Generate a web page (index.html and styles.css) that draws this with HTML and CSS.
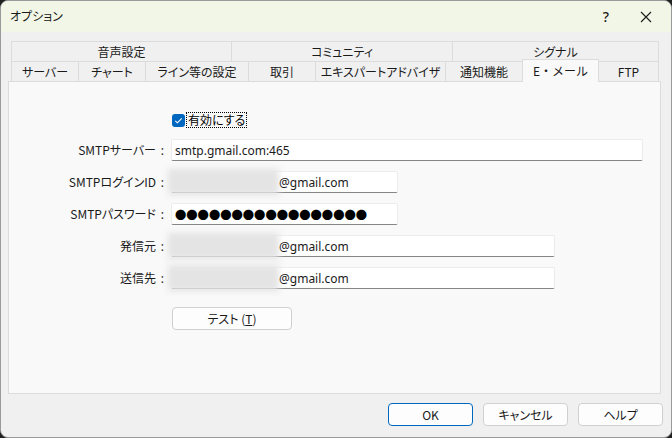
FILE: index.html
```html
<!DOCTYPE html>
<html lang="ja">
<head>
<meta charset="utf-8">
<title>オプション</title>
<link rel="stylesheet" href="styles.css">
</head>
<body>
<div class="window">
  <div class="titlebar">
    <span class="title">オプション</span>
    <span class="tb-help">?</span>
    <span class="tb-close">
      <svg width="12" height="12" viewBox="0 0 12 12"><path d="M1 1 L11 11 M11 1 L1 11" stroke="#1a1a1a" stroke-width="1.1" fill="none"/></svg>
    </span>
  </div>
  <div class="content">
    <div class="tabs">
      <div class="tabrow row1">
        <div class="tab w220">音声設定</div>
        <div class="tab w221">コミュニティ</div>
        <div class="tab w207">シグナル</div>
      </div>
      <div class="tabrow row2">
        <div class="tab t1">サーバー</div>
        <div class="tab t2">チャート</div>
        <div class="tab t3">ライン等の設定</div>
        <div class="tab t4">取引</div>
        <div class="tab t5">エキスパートアドバイザ</div>
        <div class="tab t6">通知機能</div>
        <div class="tab t7 selected">E・メール</div>
        <div class="tab t8">FTP</div>
      </div>
    </div>
    <div class="panel">
      <div class="form">
        <div class="row check-row">
          <span class="label"></span>
          <span class="checkbox">
            <svg width="13" height="13" viewBox="0 0 13 13"><rect x="0" y="0" width="13" height="13" rx="3" fill="#0067c0"/><path d="M3.3 6.8 L5.4 8.8 L9.8 4.4" stroke="#fff" stroke-width="1.1" fill="none"/></svg>
          </span>
          <span class="check-label">有効にする</span>
        </div>
        <div class="row">
          <span class="label">SMTPサーバー<span class="colon">:</span></span>
          <div class="input w-long">smtp.gmail.com:465</div>
        </div>
        <div class="row">
          <span class="label">SMTPログインID<span class="colon">:</span></span>
          <div class="input w-short"><span class="blur"></span><span class="after">@gmail.com</span></div>
        </div>
        <div class="row">
          <span class="label">SMTPパスワード<span class="colon">:</span></span>
          <div class="input w-short"><span class="dots">●●●●●●●●●●●●●●●●●</span></div>
        </div>
        <div class="row">
          <span class="label">発信元<span class="colon">:</span></span>
          <div class="input w-mid"><span class="blur"></span><span class="after">@gmail.com</span></div>
        </div>
        <div class="row">
          <span class="label">送信先<span class="colon">:</span></span>
          <div class="input w-mid"><span class="blur"></span><span class="after">@gmail.com</span></div>
        </div>
        <div class="row test-row">
          <span class="label"></span>
          <button class="btn test">テスト (<u>T</u>)</button>
        </div>
      </div>
    </div>
    <div class="buttons">
      <button class="btn default">OK</button>
      <button class="btn">キャンセル</button>
      <button class="btn">ヘルプ</button>
    </div>
  </div>
</div>
</body>
</html>
```
FILE: styles.css
```css
* { box-sizing: border-box; }
html, body { margin: 0; padding: 0; }
body {
  width: 672px;
  height: 438px;
  background: #202020;
  font-family: "Noto Sans", "Noto Sans CJK JP", sans-serif;
  font-size: 12px;
  color: #000;
  overflow: hidden;
}
.window {
  width: 672px;
  height: 438px;
  background: #f0f0f0;
  border-radius: 8px;
  border: 1px solid #9a9a9a;
  overflow: hidden;
  display: flex;
  flex-direction: column;
}
.titlebar {
  height: 31px;
  flex: none;
  background: #f2f6e6;
  display: flex;
  align-items: center;
  font-family: "Noto Sans CJK JP", sans-serif;
  font-feature-settings: "palt";
  font-size: 12px;
  color: #1a1a1a;
}
.title { padding-left: 9px; flex: 1; margin-top: -2px; }
.tb-help { width: 20px; text-align: center; margin-right: 24px; font-family: "Noto Sans", sans-serif; font-size: 14px; font-weight: 500; }
.tb-close { width: 12px; height: 12px; margin-right: 19px; display: flex; }
.content {
  flex: 1;
  padding: 9px 8px 0 7px;
  display: flex;
  flex-direction: column;
}
.tabs { padding: 0 3px 0 3px; font-family: "Noto Sans CJK JP", sans-serif; font-feature-settings: "palt"; }
.tabrow { display: flex; height: 20px; }
.tab {
  height: 20px;
  border: 1px solid #dcdcdc;
  border-right: none;
  border-bottom: none;
  background: #f0f0f0;
  display: flex;
  align-items: center;
  justify-content: center;
  font-size: 12px;
  color: #1a1a1a;
  line-height: 1;
  white-space: nowrap;
}
.tab:last-child { border-right: 1px solid #dcdcdc; }
.w220 { width: 220px; }
.w221 { width: 221px; }
.w207 { width: 207px; }
.t1 { width: 67px; }
.t2 { width: 67px; }
.t3 { width: 103px; }
.t4 { width: 67px; }
.t5 { width: 130px; }
.t6 { width: 77px; }
.t7 { width: 77px; font-feature-settings: normal; }
.t8 { width: 61px; }
.tab.selected {
  background: #f9f9f9;
  height: 23px;
  margin-top: -2px;
  position: relative;
  z-index: 2;
  border-right: 1px solid #dcdcdc;
  margin-right: -1px;
  padding-bottom: 1px;
}
.panel {
  height: 313px;
  background: #f9f9f9;
  border: 1px solid #dcdcdc;
  margin-right: 2px;
  position: relative;
  z-index: 1;
}
.form {
  padding-top: 30px;
  display: flex;
  flex-direction: column;
  gap: 10px;
}
.row { display: flex; align-items: center; height: 22px; }
.check-row { height: 16px; margin-bottom: 1px; }
.label {
  width: 155px;
  flex: none;
  text-align: right;
  margin-right: 7px;
  font-family: "Noto Sans CJK JP", sans-serif;
  font-feature-settings: "palt";
  font-size: 12px;
  color: #1a1a1a;
  white-space: nowrap;
}
.colon {
  display: inline-block;
  width: 8px;
  text-align: right;
  font-family: "Noto Sans", sans-serif;
}
.checkbox { display: flex; width: 13px; height: 13px; margin-left: 1px; }
.check-label {
  margin-left: 1px;
  padding: 0 1px;
  border: 1px dotted #000;
  font-family: "Noto Sans CJK JP", sans-serif;
  font-feature-settings: "palt";
  line-height: 14px;
}
.input {
  height: 22px;
  background: #fff;
  border: 1px solid #ececec;
  border-bottom: 1px solid #868686;
  border-radius: 2px;
  padding-left: 3px;
  display: flex;
  align-items: center;
  font-size: 12px;
  position: relative;
  color: #1a1a1a;
}
.w-long { width: 472px; }
.w-short { width: 227px; }
.w-mid { width: 384px; }
.blur {
  position: absolute;
  left: -4px;
  top: -3px;
  width: 111px;
  height: 26px;
  background: #e4e4e4;
  filter: blur(3px);
}
.after { margin-left: 104px; position: relative; }
.dots {
  font-family: "Noto Sans CJK JP", sans-serif;
  font-size: 11.3px;
  color: #000;
}
.test-row { margin-top: 8px; height: 23px; }
.btn {
  height: 23px;
  width: 85px;
  background: #fdfdfd;
  border: 1px solid #d0d0d0;
  border-radius: 4px;
  font-family: "Noto Sans CJK JP", sans-serif;
  font-feature-settings: "palt";
  font-size: 12px;
  color: #1a1a1a;
  padding: 0;
  display: flex;
  align-items: center;
  justify-content: center;
}
.btn.test { width: 120px; margin-left: 1px; }
.btn.default { border: 1px solid #0067c0; }
.buttons {
  display: flex;
  justify-content: flex-end;
  gap: 10px;
  margin-top: 9px;
}
```
